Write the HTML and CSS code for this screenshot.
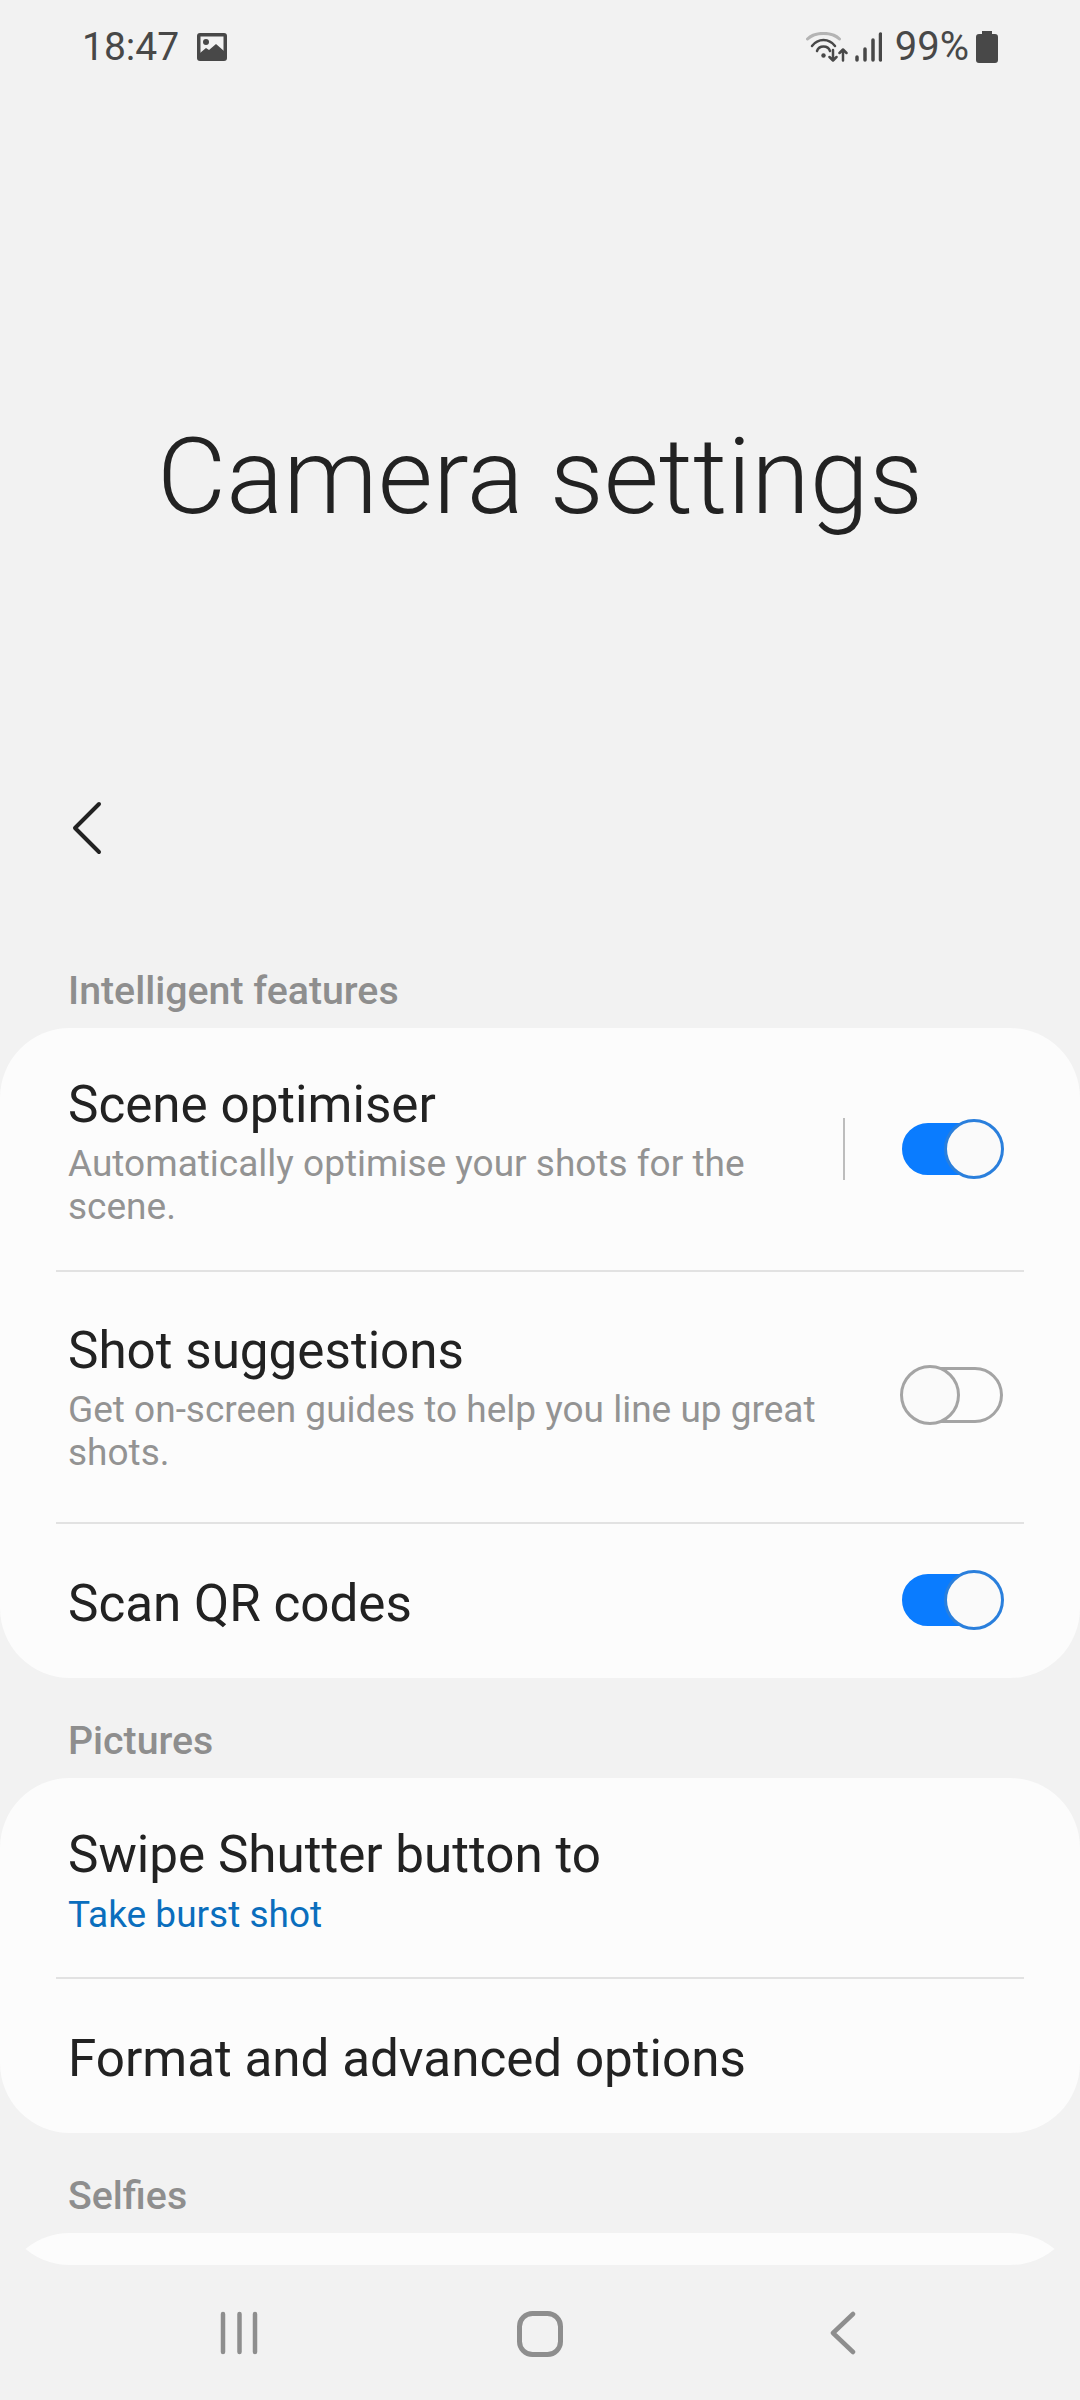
FILE: index.html
```html
<!DOCTYPE html>
<html lang="en">
<head>
    <meta charset="UTF-8">
    <meta name="viewport" content="width=device-width, initial-scale=1.0">
    <title>Camera settings</title>
    <link rel="stylesheet" href="styles.css">
</head>
<body>
    <div class="screen">
        <div class="status-bar">
            <div class="status-left">
                <span class="status-time">18:47</span>
                <svg class="icon-picture" width="30" height="28" viewBox="0 0 30 28">
                    <rect width="30" height="28" rx="3" fill="#484848"/>
                    <rect x="3.5" y="3.5" width="23" height="17" fill="#f2f2f2"/>
                    <circle cx="9" cy="9" r="3" fill="#484848"/>
                    <path d="M3 20 L9 15 L12 17 L19 11 L27 18 V24 H3 Z" fill="#484848"/>
                </svg>
            </div>
            <div class="status-right">
                <svg class="icon-wifi" width="42" height="30" viewBox="0 0 42 30" fill="none" stroke-linecap="round" stroke-linejoin="round">
                    <path d="M1.5 7 C9 -0.5 26 -0.5 33.5 7" stroke="#b4b4b4" stroke-width="3"/>
                    <path d="M6 14 C12 6 23 6 29 14" stroke="#484848" stroke-width="2.5"/>
                    <path d="M11 19 C13 13 22 13 24 19" stroke="#484848" stroke-width="2.5"/>
                    <circle cx="17.5" cy="23.5" r="2.2" fill="#484848"/>
                    <path d="M27 18 V28 M23.5 25 L27 28.5 L30.5 25" stroke="#484848" stroke-width="2.5"/>
                    <path d="M37 28.5 V18 M33.5 21 L37 17.5 L40.5 21" stroke="#484848" stroke-width="2.5"/>
                </svg>
                <svg class="icon-signal" width="27" height="30" viewBox="0 0 27 30" fill="none" stroke="#484848" stroke-width="3.5" stroke-linecap="round">
                    <path d="M2 25 V28 M10 17 V28 M18 8 V28 M25.5 2 V28"/>
                </svg>
                <span class="status-battery">99%</span>
                <svg class="icon-battery" width="22" height="32" viewBox="0 0 22 32">
                    <path d="M6 0 H16 V3 H19 Q22 3 22 6 V29 Q22 32 19 32 H3 Q0 32 0 29 V6 Q0 3 3 3 H6 Z" fill="#484848"/>
                </svg>
            </div>
        </div>

        <div class="title-area">
            <h1 class="page-title">Camera settings</h1>
        </div>

        <div class="toolbar">
            <svg width="30" height="54" viewBox="0 0 30 54" fill="none" stroke="#222" stroke-width="4" stroke-linecap="round" stroke-linejoin="round">
                <path d="M27 3 L3 27 L27 51"/>
            </svg>
        </div>

        <div class="settings-list">
            <div class="section-label">Intelligent features</div>
            <div class="card">
                <div class="row row-first">
                    <div class="row-text">
                        <div class="row-title">Scene optimiser</div>
                        <div class="row-sub">Automatically optimise your shots for the scene.</div>
                    </div>
                    <span class="row-sep"></span>
                    <span class="toggle toggle-on"></span>
                </div>
                <div class="row row-second">
                    <div class="row-text">
                        <div class="row-title">Shot suggestions</div>
                        <div class="row-sub">Get on-screen guides to help you line up great shots.</div>
                    </div>
                    <span class="toggle"></span>
                </div>
                <div class="row row-single">
                    <div class="row-text">
                        <div class="row-title">Scan QR codes</div>
                    </div>
                    <span class="toggle toggle-on"></span>
                </div>
            </div>

            <div class="section-label">Pictures</div>
            <div class="card">
                <div class="row row-value">
                    <div class="row-text">
                        <div class="row-title">Swipe Shutter button to</div>
                        <div class="row-value-text">Take burst shot</div>
                    </div>
                </div>
                <div class="row row-single">
                    <div class="row-text">
                        <div class="row-title">Format and advanced options</div>
                    </div>
                </div>
            </div>

            <div class="section-label">Selfies</div>
            <div class="card card-cut"></div>
        </div>

        <div class="nav-bar">
            <svg width="38" height="44" viewBox="0 0 38 44" fill="none" stroke="#8e8e8e" stroke-width="4.5" stroke-linecap="round">
                <path d="M3 3 V41 M19.5 3 V41 M35 3 V41"/>
            </svg>
            <svg width="46" height="46" viewBox="0 0 46 46" fill="none" stroke="#8e8e8e" stroke-width="5">
                <rect x="2.5" y="2.5" width="41" height="41" rx="13"/>
            </svg>
            <svg width="26" height="44" viewBox="0 0 26 44" fill="none" stroke="#8e8e8e" stroke-width="4.5" stroke-linecap="round" stroke-linejoin="round">
                <path d="M23 3 L3 22 L23 41"/>
            </svg>
        </div>
    </div>
</body>
</html>
```

FILE: styles.css
```css
*, *::before, *::after {
    box-sizing: border-box;
}
html, body {
    margin: 0;
    padding: 0;
}
body {
    font-family: Roboto, "Noto Sans", sans-serif;
    background-color: #f2f2f2;
    color: #222;
}
.screen {
    width: 1080px;
    height: 2400px;
    display: flex;
    flex-direction: column;
    overflow: hidden;
}

/* status bar */
.status-bar {
    height: 90px;
    padding: 24px 82px 0 82px;
    display: flex;
    justify-content: space-between;
    align-items: flex-start;
    color: #484848;
    font-size: 39px;
    line-height: 46px;
}
.status-left, .status-right {
    display: flex;
    align-items: center;
}
.status-left {
    gap: 18px;
}
.status-right {
    gap: 7px;
}
.status-battery {
    margin-left: 6px;
    font-size: 40px;
}

/* big title */
.title-area {
    height: 700px;
    padding-top: 322px;
}
.page-title {
    margin: 0;
    text-align: center;
    font-size: 106.5px;
    font-weight: 300;
    line-height: 130px;
    color: #222;
}
.toolbar {
    height: 76px;
    padding: 11px 0 0 72px;
}

/* list */
.settings-list {
    height: 1399px;
    padding-top: 62px;
    overflow: hidden;
    border-radius: 0 0 70px 70px;
}
.section-label {
    height: 100px;
    padding: 41px 0 0 68px;
    font-size: 39.3px;
    font-weight: 500;
    line-height: 44px;
    color: #8e8e8e;
}
.card {
    background-color: #fcfcfc;
    border-radius: 70px;
}
.card-cut {
    height: 200px;
}
.row {
    position: relative;
    display: flex;
    align-items: center;
    padding: 0 77px 0 68px;
}
.row + .row::before {
    content: "";
    position: absolute;
    top: 0;
    left: 56px;
    right: 56px;
    height: 2px;
    background-color: #e2e2e2;
}
.row-first {
    height: 242px;
}
.row-first .row-text {
    padding-top: 5px;
}
.row-second {
    height: 252px;
}
.row-second .row-text {
    padding-top: 2px;
}
.row-second .toggle {
    margin-bottom: 2px;
}
.row-single {
    height: 156px;
}
.row-single .row-text {
    padding-top: 8px;
}
.row-value {
    height: 199px;
}
.row-value .row-text {
    padding-top: 5px;
}
.row-text {
    flex: 1;
    min-width: 0;
    padding-right: 60px;
}
.row-title {
    font-size: 51.2px;
    line-height: 60px;
    color: #222;
}
.row-sub {
    font-size: 37px;
    line-height: 43px;
    color: #939393;
    margin-top: 7px;
}
.row-value-text {
    font-size: 37px;
    line-height: 43px;
    color: #0a6ebd;
    margin-top: 8px;
}
.row-sep {
    width: 2px;
    height: 62px;
    background-color: #bdbdbd;
    margin-right: 57px;
}

/* toggles */
.toggle {
    position: relative;
    display: block;
    flex: none;
    width: 101px;
    height: 56px;
    border: 3px solid #a4a4a4;
    border-radius: 28px;
}
.toggle::after {
    content: "";
    position: absolute;
    top: -5px;
    left: -5px;
    width: 60px;
    height: 60px;
    border: 3px solid #a4a4a4;
    border-radius: 50%;
    background-color: #fafafa;
}
.toggle-on {
    height: 52px;
    background-color: #0a7cff;
    border-color: #0a7cff;
}
.toggle-on::after {
    top: -7px;
    left: auto;
    right: -4px;
    border-color: #2a7fdc;
}

/* navigation bar */
.nav-bar {
    flex: 1;
    display: grid;
    grid-template-columns: 238px 364px 242px;
    justify-items: center;
    align-items: start;
    padding: 46px 0 0 120px;
}
```
